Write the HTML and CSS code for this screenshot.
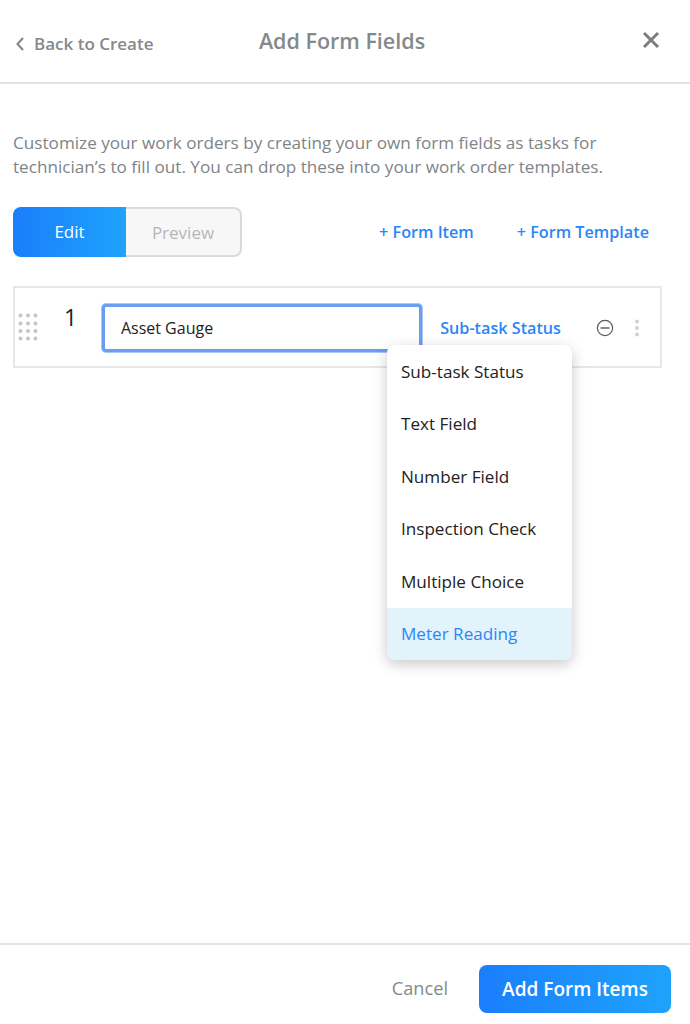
FILE: index.html
```html
<!DOCTYPE html>
<html>
<head>
    <title>Add Form Fields</title>
    <meta name="viewport" content="width=device-width, initial-scale=1">
    <link rel="stylesheet" href="styles.css">
</head>

<body>
    <div class="page">
        <header class="top-bar">
            <a class="back-link">
                <svg class="back-icon" width="10" height="16" viewBox="0 0 10 16"><path d="M8 2 L2.5 8 L8 14" fill="none" stroke="#808487" stroke-width="2"/></svg>
                Back to Create
            </a>
            <h1 class="title">Add Form Fields</h1>
            <svg class="close-icon" width="18" height="18" viewBox="0 0 18 18"><path d="M2 2 L16 16 M16 2 L2 16" fill="none" stroke="#7a7e81" stroke-width="3"/></svg>
        </header>

        <main class="content">
            <p class="intro">Customize your work orders by creating your own form fields as tasks for technician’s to fill out. You can drop these into your work order templates.</p>

            <div class="toolbar">
                <div class="toggle">
                    <div class="toggle-edit">Edit</div>
                    <div class="toggle-preview">Preview</div>
                </div>
                <div class="add-links">
                    <a class="add-link">+ Form Item</a>
                    <a class="add-link">+ Form Template</a>
                </div>
            </div>

            <div class="field-row">
                <svg class="drag-icon" width="20" height="28" viewBox="0 0 20 28">
                    <g fill="#c4c6c8">
                        <circle cx="2.5" cy="2.5" r="2"/><circle cx="10" cy="2.5" r="2"/><circle cx="17.5" cy="2.5" r="2"/>
                        <circle cx="2.5" cy="10.5" r="2"/><circle cx="10" cy="10.5" r="2"/><circle cx="17.5" cy="10.5" r="2"/>
                        <circle cx="2.5" cy="18" r="2"/><circle cx="10" cy="18" r="2"/><circle cx="17.5" cy="18" r="2"/>
                        <circle cx="2.5" cy="25.5" r="2"/><circle cx="10" cy="25.5" r="2"/><circle cx="17.5" cy="25.5" r="2"/>
                    </g>
                </svg>
                <div class="field-num">1</div>
                <div class="field-input">Asset Gauge</div>
                <a class="field-type">Sub-task Status</a>
                <svg class="remove-icon" width="18" height="18" viewBox="0 0 18 18"><circle cx="9" cy="9" r="7.6" fill="none" stroke="#55595c" stroke-width="1.2"/><path d="M4.5 9 H13.5" stroke="#55595c" stroke-width="1.4"/></svg>
                <svg class="more-icon" width="6" height="18" viewBox="0 0 6 18"><g fill="#cfd1d3"><circle cx="3" cy="2.5" r="2"/><circle cx="3" cy="9" r="2"/><circle cx="3" cy="15.5" r="2"/></g></svg>

                <ul class="menu">
                    <li>Sub-task Status</li>
                    <li>Text Field</li>
                    <li>Number Field</li>
                    <li>Inspection Check</li>
                    <li>Multiple Choice</li>
                    <li class="selected">Meter Reading</li>
                </ul>
            </div>
        </main>

        <footer class="bottom-bar">
            <a class="cancel">Cancel</a>
            <button class="submit-btn">Add Form Items</button>
        </footer>
    </div>
</body>
</html>
```

FILE: styles.css
```css
body {
    font-family: "Open Sans", Arial, sans-serif;
    margin: 0;
    padding: 0;
    background-color: #fff;
}

.page {
    display: flex;
    flex-direction: column;
    height: 1024px;
    overflow: hidden;
}

.top-bar {
    display: grid;
    grid-template-columns: 1fr auto 1fr;
    align-items: center;
    box-sizing: border-box;
    height: 84px;
    padding: 0 30px 0 15px;
    border-bottom: 2px solid #e2e3e4;
}

.back-link {
    display: flex;
    align-items: center;
    gap: 9px;
    margin-top: 5px;
    font-size: 17px;
    font-weight: 600;
    color: #85898c;
}

.title {
    margin: 0 0 2px 9px;
    font-size: 21.5px;
    font-weight: 600;
    color: #85898c;
}

.close-icon {
    justify-self: end;
    margin-bottom: 2px;
}

.content {
    flex: 1;
    padding: 47px 13px 0;
}

.intro {
    width: 630px;
    margin: 0;
    font-size: 17.15px;
    line-height: 24px;
    color: #808487;
}

.toolbar {
    display: flex;
    align-items: center;
    justify-content: space-between;
    margin-top: 28px;
    padding-right: 28px;
}

.toggle {
    display: flex;
    width: 229px;
    height: 50px;
    font-size: 17px;
}

.toggle-edit {
    display: flex;
    align-items: center;
    justify-content: center;
    width: 113px;
    padding-bottom: 2px;
    box-sizing: border-box;
    color: #fff;
    border-radius: 8px 0 0 8px;
    background: linear-gradient(90deg, #1a7efb, #1ea3fb);
}

.toggle-preview {
    display: flex;
    align-items: center;
    justify-content: center;
    flex: 1;
    color: #b4b7b9;
    background-color: #f7f7f8;
    border: 2px solid #d8dadb;
    border-left: none;
    border-radius: 0 8px 8px 0;
}

.add-links {
    display: flex;
    gap: 43px;
}

.add-link {
    font-size: 16.2px;
    font-weight: 600;
    color: #2a86f8;
}

.field-row {
    position: relative;
    display: flex;
    align-items: center;
    box-sizing: border-box;
    width: 649px;
    height: 82px;
    margin-top: 29px;
    padding: 2px 20px 0 3px;
    border: 2px solid #e6e7e8;
}

.drag-icon {
    margin-bottom: 2px;
}

.field-num {
    width: 20px;
    margin: 0 0 22px 26px;
    font-size: 23px;
    color: #222;
}

.field-input {
    display: flex;
    align-items: center;
    box-sizing: border-box;
    width: 321px;
    height: 48px;
    margin-left: 18px;
    padding-left: 16px;
    font-size: 16px;
    color: #222;
    background-color: #fff;
    border: 3px solid #6a9ff0;
    border-radius: 4px;
    box-shadow: 0 0 0 1px #a9c8f6;
}

.field-type {
    margin-left: 18px;
    font-size: 16.2px;
    font-weight: 600;
    color: #2a86f8;
    white-space: nowrap;
}

.remove-icon {
    flex-shrink: 0;
    margin-left: 35px;
}

.more-icon {
    flex-shrink: 0;
    margin-left: 20px;
}

.menu {
    position: absolute;
    top: 57px;
    left: 372px;
    width: 185px;
    margin: 0;
    padding: 0;
    list-style: none;
    background-color: #fff;
    border-radius: 8px;
    box-shadow: 0 4px 14px rgba(0, 0, 0, 0.22);
    overflow: hidden;
}

.menu li {
    display: flex;
    align-items: center;
    height: 52.5px;
    padding-left: 14px;
    font-size: 17.1px;
    color: #222;
}

.menu li.selected {
    color: #2a86f8;
    background-color: #e2f3fb;
}

.bottom-bar {
    display: flex;
    align-items: center;
    justify-content: flex-end;
    box-sizing: border-box;
    height: 81px;
    padding: 9px 19px 0 0;
    border-top: 2px solid #e2e3e4;
}

.cancel {
    margin: 0 31px 2px 0;
    font-size: 18.2px;
    color: #85898c;
}

.submit-btn {
    width: 192px;
    height: 48px;
    font-family: inherit;
    font-size: 19px;
    font-weight: 600;
    color: #fff;
    border: none;
    border-radius: 8px;
    background: linear-gradient(90deg, #1a7efb, #1ea3fb);
}
```
